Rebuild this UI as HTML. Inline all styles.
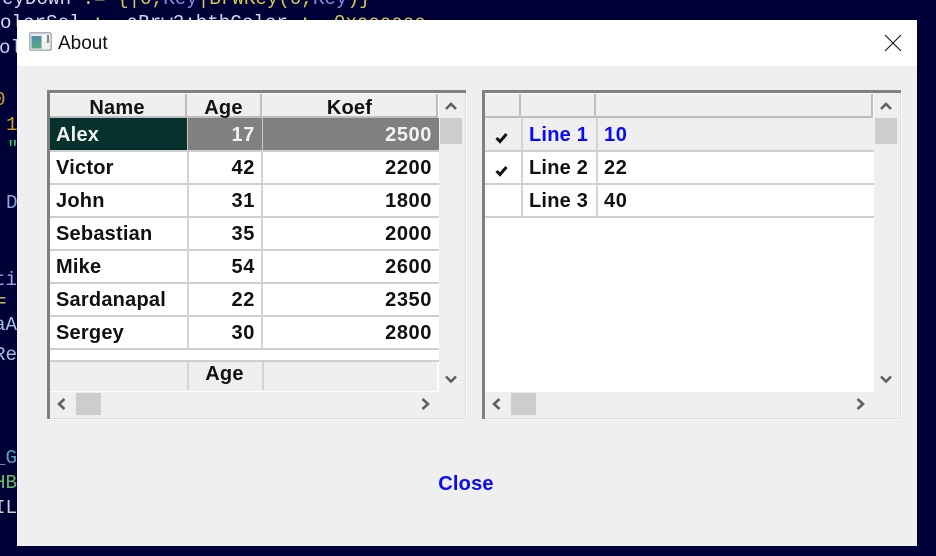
<!DOCTYPE html>
<html><head><meta charset="utf-8"><style>
html,body{margin:0;padding:0;width:936px;height:556px;overflow:hidden;background:#000038}
div{position:absolute;box-sizing:border-box}
#w{left:0;top:0;width:936px;height:556px;filter:blur(.35px)}
.t{font:bold 20px/24px "Liberation Sans",sans-serif;letter-spacing:.22px;color:#111;white-space:nowrap}
.n{letter-spacing:.6px}
.r{text-align:right}.c{text-align:center}
.bg{font:19.2px/24px "Liberation Mono",monospace;white-space:pre}
.y{color:#d8c850}.b{color:#8090e0}.p{color:#d8d8f0}
</style></head><body><div id="w">
<div class="bg" style="left:2px;top:-13px"><span class="p">eyDown</span><span class="y"> := {|0,</span><span class="b">Key</span><span class="y">|BrWKey(0,</span><span class="b">Key</span><span class="y">)}</span></div>
<div class="bg" style="left:0;top:11px"><span class="p">olorSel</span><span class="y"> :  </span><span class="p">aBrw2:bthColor</span><span class="y"> :  0xaaaaaa</span></div>
<div class="bg" style="left:-1px;top:36px;color:#c8d0f0">ol</div>
<div class="bg" style="left:-6px;top:88px;color:#d0a020">0</div>
<div class="bg" style="left:6px;top:113px;color:#d0a020">1</div>
<div class="bg" style="left:7px;top:137px;color:#40c060">"</div>
<div class="bg" style="left:6px;top:191px;color:#8aa8d8">D</div>
<div class="bg" style="left:-6px;top:268px;color:#a0a0e0">ti</div>
<div class="bg" style="left:-5px;top:290px;color:#e0d040">=</div>
<div class="bg" style="left:-6px;top:313px;color:#a0c0e0">aA</div>
<div class="bg" style="left:-6px;top:343px;color:#a0c0e0">Re</div>
<div class="bg" style="left:-6px;top:446px;color:#50a0c0">_G</div>
<div class="bg" style="left:-6px;top:471px;color:#60c060">HB</div>
<div class="bg" style="left:-6px;top:496px;color:#d0d0d0">IL</div>

<div style="left:17px;top:20px;width:900px;height:526px;background:#efefef"></div>
<div style="left:17px;top:20px;width:900px;height:46px;background:#fff"></div>

<svg style="position:absolute;left:29px;top:32px" width="23" height="20" viewBox="0 0 23 20">
<defs><linearGradient id="g" x1="0" y1="0" x2="0" y2="1"><stop offset="0" stop-color="#4f8fb0"/><stop offset="1" stop-color="#5aa77c"/></linearGradient></defs>
<rect x=".75" y=".75" width="21.5" height="17.5" rx="1.5" fill="#e8eaec" stroke="#aeb2b6" stroke-width="1.5"/>
<rect x="2.5" y="4" width="10" height="12.5" fill="url(#g)"/>
<rect x="13" y="3" width="5" height="7" fill="#f7f7f7"/>
<rect x="18" y="3" width="2" height="9" fill="#6d8f88"/>
<rect x="13" y="11" width="7" height="5.5" fill="#f2f2f2"/>
</svg>
<div style="left:58px;top:32px;font:19px/23px 'Liberation Sans',sans-serif;color:#111">About</div>
<svg style="position:absolute;left:884px;top:34px" width="18" height="18" viewBox="0 0 18 18"><path d="M1 1L17 17M17 1L1 17" stroke="#111" stroke-width="1.1" fill="none"/></svg>

<!-- LEFT GRID -->
<div style="left:47px;top:90px;width:420px;height:330px;background:#efefef;border-right:1px solid #fafafa;border-bottom:1px solid #fafafa;box-shadow:inset -1px -1px 0 #dedede"></div>
<div style="left:47px;top:90px;width:419px;height:3px;background:#808080"></div>
<div style="left:47px;top:90px;width:3px;height:329px;background:#808080"></div>
<div style="left:50px;top:93px;width:389px;height:299px;background:#fff"></div>
<div style="left:50px;top:94px;width:387px;height:24px;background:#efefef"></div>
<div style="left:185px;top:94px;width:2px;height:24px;background:#bdbdbd"></div>
<div style="left:260px;top:94px;width:2px;height:24px;background:#bdbdbd"></div>
<div style="left:436px;top:94px;width:2px;height:24px;background:#bdbdbd"></div>
<div style="left:50px;top:116px;width:387px;height:2px;background:#bdbdbd"></div>
<div class="t c" style="left:49px;top:96px;width:136px">Name</div>
<div class="t c" style="left:187px;top:96px;width:73px">Age</div>
<div class="t c" style="left:263px;top:96px;width:173px">Koef</div>

<div style="left:50px;top:118px;width:137px;height:32px;background:#06312d"></div>
<div style="left:187px;top:118px;width:252px;height:32px;background:#808080"></div>
<div style="left:187px;top:118px;width:1px;height:32px;background:#c8c8c8"></div>
<div style="left:262px;top:118px;width:1px;height:32px;background:#c8c8c8"></div>

<div style="left:187px;top:150px;width:2px;height:199px;background:#d4d4d4"></div>
<div style="left:261px;top:150px;width:2px;height:199px;background:#d4d4d4"></div>
<div style="left:50px;top:150px;width:389px;height:2px;background:#cfcfcf"></div>
<div style="left:50px;top:183px;width:389px;height:2px;background:#cfcfcf"></div>
<div style="left:50px;top:216px;width:389px;height:2px;background:#cfcfcf"></div>
<div style="left:50px;top:249px;width:389px;height:2px;background:#cfcfcf"></div>
<div style="left:50px;top:282px;width:389px;height:2px;background:#cfcfcf"></div>
<div style="left:50px;top:315px;width:389px;height:2px;background:#cfcfcf"></div>
<div style="left:50px;top:348px;width:389px;height:2px;background:#cfcfcf"></div>
<div style="left:50px;top:360px;width:389px;height:2px;background:#cfcfcf"></div>
<div style="left:50px;top:362px;width:387px;height:29px;background:#efefef"></div>
<div style="left:187px;top:362px;width:2px;height:28px;background:#d4d4d4"></div>
<div style="left:262px;top:362px;width:2px;height:28px;background:#d4d4d4"></div>

<div class="t" style="left:56px;top:123px;color:#f2f2f2">Alex</div>
<div class="t r n" style="left:190px;top:123px;width:65px;color:#f2f2f2">17</div>
<div class="t r n" style="left:270px;top:123px;width:162px;color:#f2f2f2">2500</div>
<div class="t" style="left:56px;top:156px">Victor</div>
<div class="t r n" style="left:190px;top:156px;width:65px">42</div>
<div class="t r n" style="left:270px;top:156px;width:162px">2200</div>
<div class="t" style="left:56px;top:189px">John</div>
<div class="t r n" style="left:190px;top:189px;width:65px">31</div>
<div class="t r n" style="left:270px;top:189px;width:162px">1800</div>
<div class="t" style="left:56px;top:222px">Sebastian</div>
<div class="t r n" style="left:190px;top:222px;width:65px">35</div>
<div class="t r n" style="left:270px;top:222px;width:162px">2000</div>
<div class="t" style="left:56px;top:255px">Mike</div>
<div class="t r n" style="left:190px;top:255px;width:65px">54</div>
<div class="t r n" style="left:270px;top:255px;width:162px">2600</div>
<div class="t" style="left:56px;top:288px">Sardanapal</div>
<div class="t r n" style="left:190px;top:288px;width:65px">22</div>
<div class="t r n" style="left:270px;top:288px;width:162px">2350</div>
<div class="t" style="left:56px;top:321px">Sergey</div>
<div class="t r n" style="left:190px;top:321px;width:65px">30</div>
<div class="t r n" style="left:270px;top:321px;width:162px">2800</div>
<div class="t c" style="left:188px;top:362px;width:73px">Age</div>

<!-- left scrollbars -->
<div style="left:440px;top:118px;width:22px;height:26px;background:#cdcdcd"></div>
<div style="left:76px;top:393px;width:25px;height:22px;background:#cdcdcd"></div>
<svg style="position:absolute;left:445px;top:102px" width="12" height="9" viewBox="0 0 12 9"><path d="M1 7L6 2L11 7" stroke="#606060" stroke-width="2.6" fill="none"/></svg>
<svg style="position:absolute;left:445px;top:375px" width="12" height="9" viewBox="0 0 12 9"><path d="M1 1.5L6 6.5L11 1.5" stroke="#606060" stroke-width="2.6" fill="none"/></svg>
<svg style="position:absolute;left:57px;top:398px" width="9" height="12" viewBox="0 0 9 12"><path d="M7.5 1L2 6L7.5 11" stroke="#606060" stroke-width="2.6" fill="none"/></svg>
<svg style="position:absolute;left:421px;top:398px" width="9" height="12" viewBox="0 0 9 12"><path d="M1.5 1L7 6L1.5 11" stroke="#606060" stroke-width="2.6" fill="none"/></svg>

<!-- RIGHT GRID -->
<div style="left:482px;top:90px;width:420px;height:330px;background:#efefef;border-right:1px solid #fafafa;border-bottom:1px solid #fafafa;box-shadow:inset -1px -1px 0 #dedede"></div>
<div style="left:482px;top:90px;width:419px;height:3px;background:#808080"></div>
<div style="left:482px;top:90px;width:3px;height:329px;background:#808080"></div>
<div style="left:485px;top:93px;width:389px;height:299px;background:#fff"></div>
<div style="left:485px;top:94px;width:387px;height:24px;background:#efefef"></div>
<div style="left:519px;top:94px;width:2px;height:24px;background:#bdbdbd"></div>
<div style="left:594px;top:94px;width:2px;height:24px;background:#bdbdbd"></div>
<div style="left:871px;top:94px;width:2px;height:24px;background:#bdbdbd"></div>
<div style="left:485px;top:116px;width:387px;height:2px;background:#bdbdbd"></div>
<div style="left:485px;top:118px;width:389px;height:32px;background:#efefef"></div>
<div style="left:485px;top:150px;width:36px;height:33px;background:#fff"></div>
<div style="left:521px;top:118px;width:2px;height:99px;background:#d4d4d4"></div>
<div style="left:596px;top:118px;width:2px;height:99px;background:#d4d4d4"></div>
<div style="left:485px;top:150px;width:389px;height:2px;background:#cfcfcf"></div>
<div style="left:485px;top:183px;width:389px;height:2px;background:#cfcfcf"></div>
<div style="left:485px;top:216px;width:389px;height:2px;background:#cfcfcf"></div>

<svg style="position:absolute;left:494px;top:130px" width="16" height="14" viewBox="0 0 16 14"><path d="M2.5 8L6 11.5L12.5 4" stroke="#111" stroke-width="3" fill="none"/></svg>
<svg style="position:absolute;left:494px;top:163px" width="16" height="14" viewBox="0 0 16 14"><path d="M2.5 8L6 11.5L12.5 4" stroke="#111" stroke-width="3" fill="none"/></svg>

<div class="t" style="left:529px;top:123px;color:#0a0af5">Line 1</div>
<div class="t n" style="left:604px;top:123px;color:#0a0af5">10</div>
<div class="t" style="left:529px;top:156px">Line 2</div>
<div class="t n" style="left:604px;top:156px">22</div>
<div class="t" style="left:529px;top:189px">Line 3</div>
<div class="t n" style="left:604px;top:189px">40</div>

<div style="left:875px;top:118px;width:22px;height:26px;background:#cdcdcd"></div>
<div style="left:511px;top:393px;width:25px;height:22px;background:#cdcdcd"></div>
<svg style="position:absolute;left:880px;top:102px" width="12" height="9" viewBox="0 0 12 9"><path d="M1 7L6 2L11 7" stroke="#606060" stroke-width="2.6" fill="none"/></svg>
<svg style="position:absolute;left:880px;top:375px" width="12" height="9" viewBox="0 0 12 9"><path d="M1 1.5L6 6.5L11 1.5" stroke="#606060" stroke-width="2.6" fill="none"/></svg>
<svg style="position:absolute;left:492px;top:398px" width="9" height="12" viewBox="0 0 9 12"><path d="M7.5 1L2 6L7.5 11" stroke="#606060" stroke-width="2.6" fill="none"/></svg>
<svg style="position:absolute;left:856px;top:398px" width="9" height="12" viewBox="0 0 9 12"><path d="M1.5 1L7 6L1.5 11" stroke="#606060" stroke-width="2.6" fill="none"/></svg>

<div class="t c" style="left:417px;top:472px;width:98px;color:#0a0af5">Close</div>
</div></body></html>
